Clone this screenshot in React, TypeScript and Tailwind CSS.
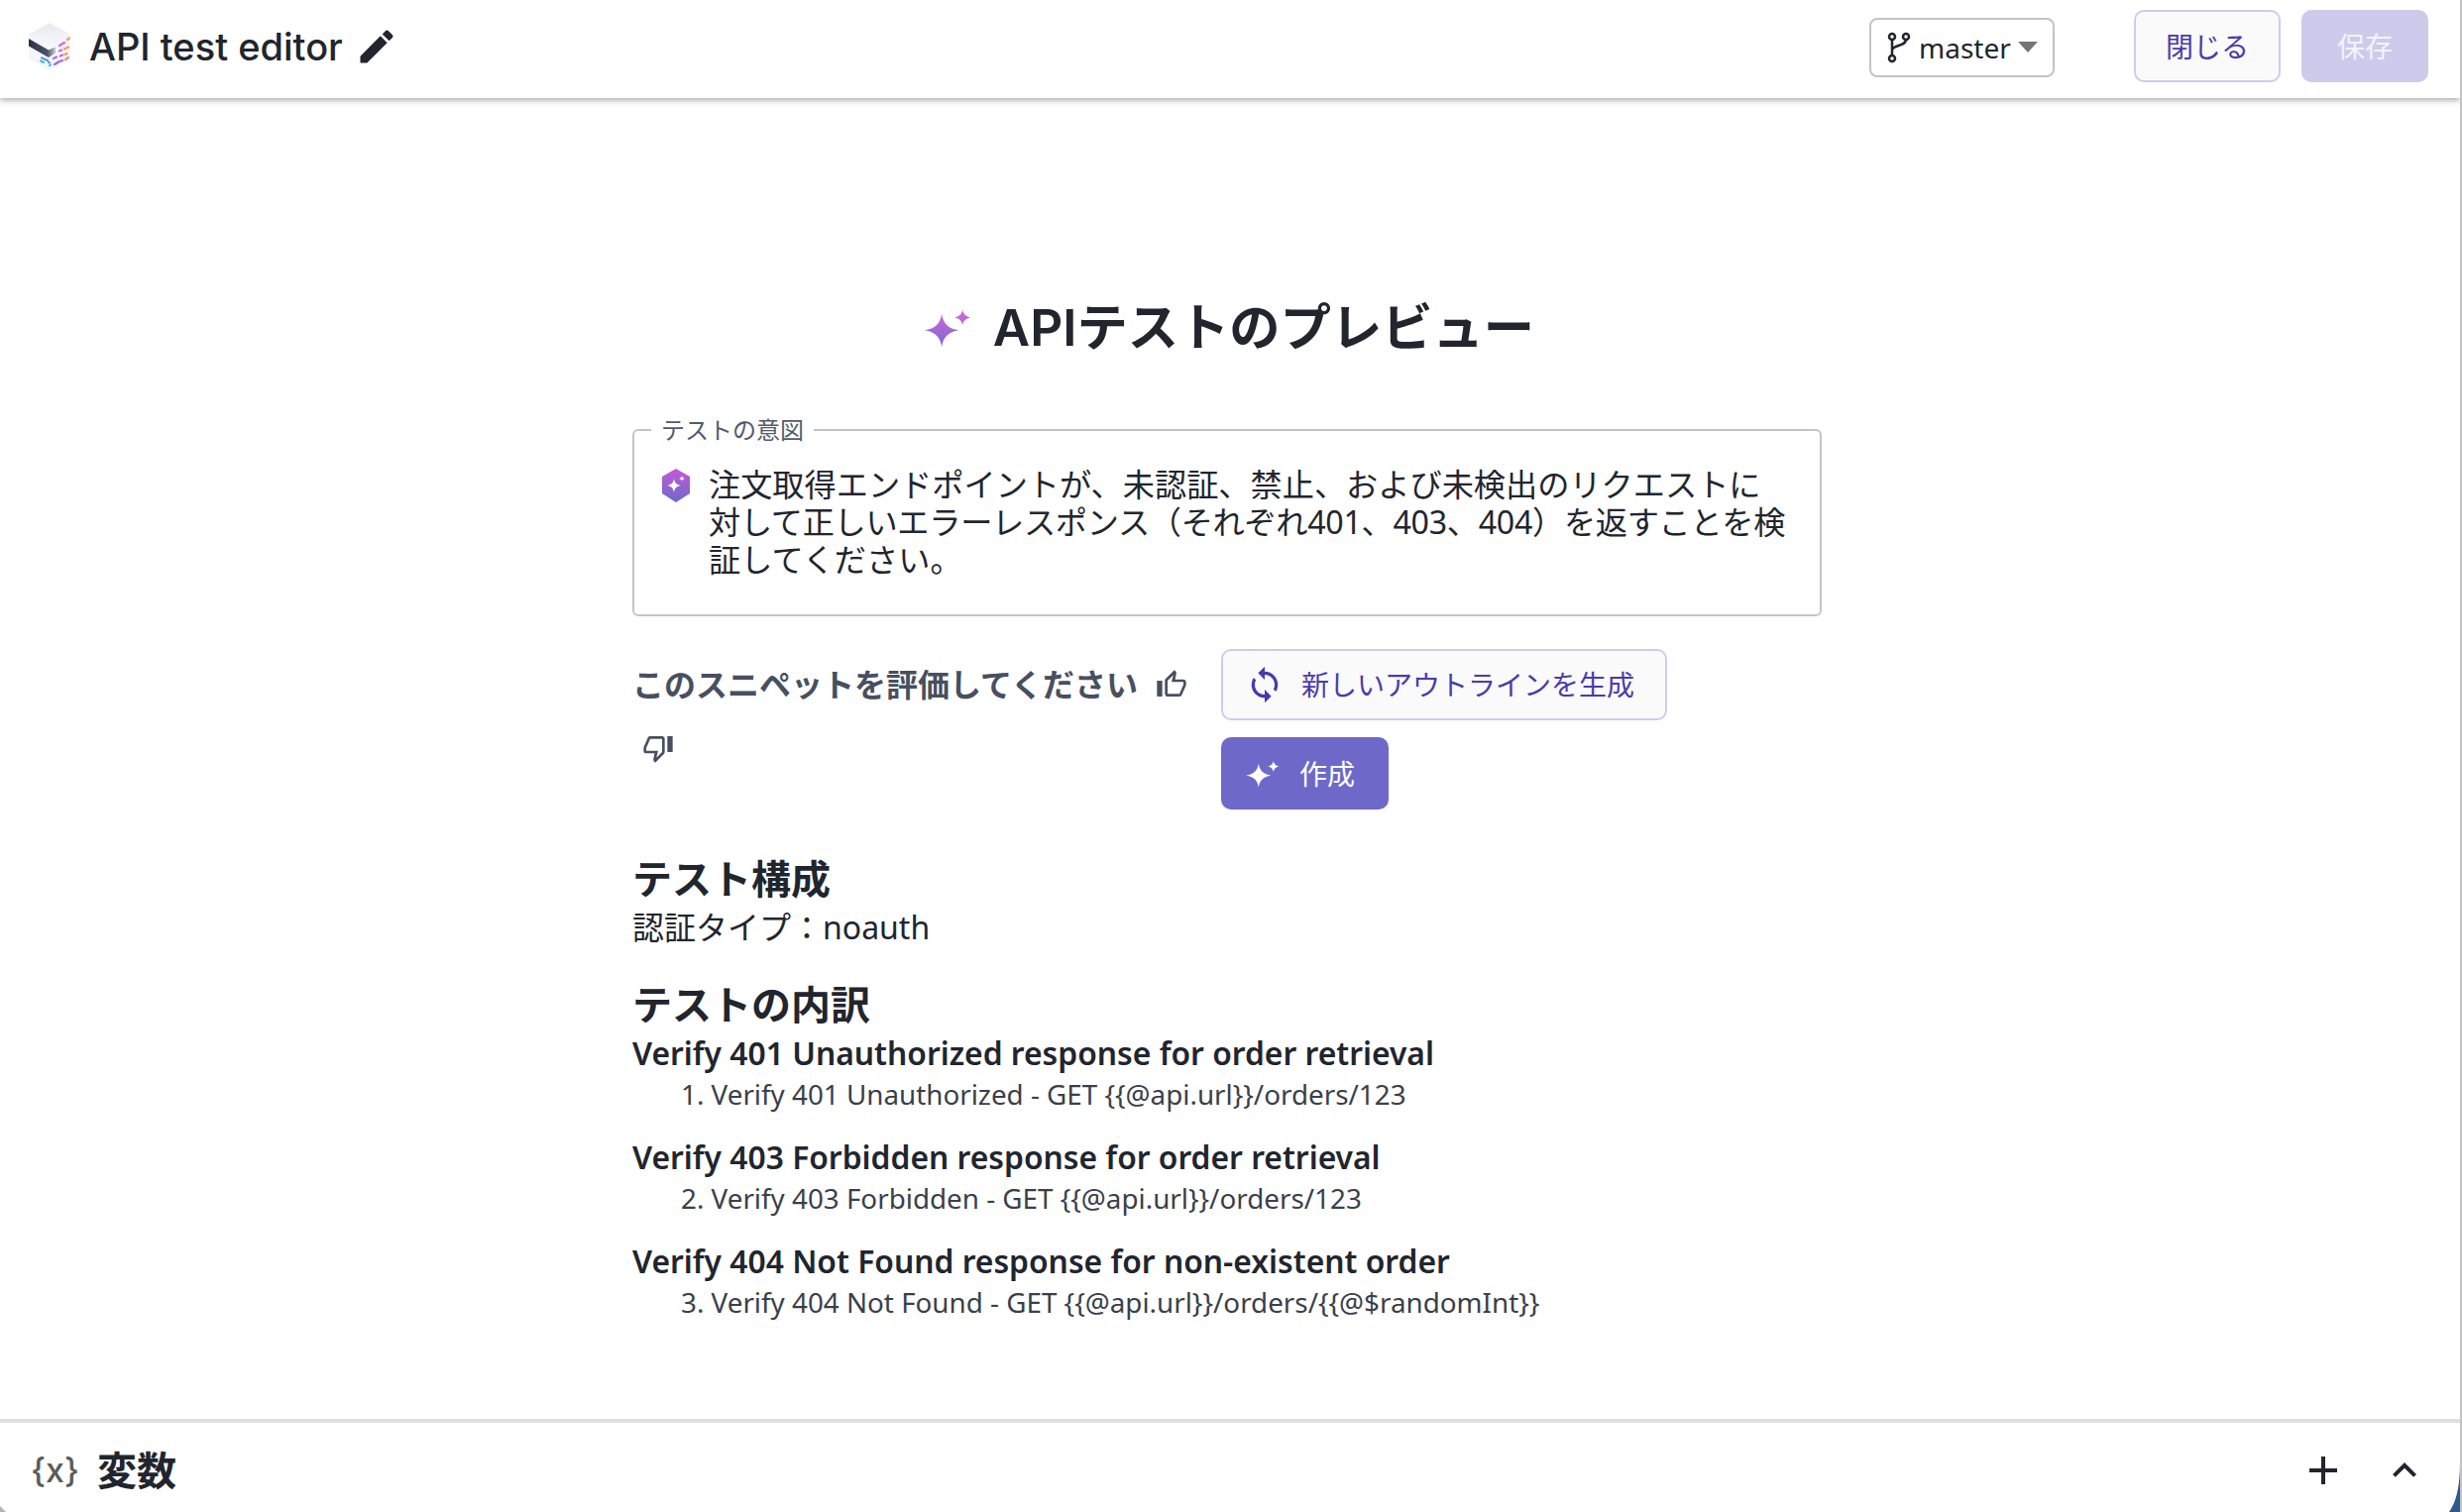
import { MdOutlineThumbUp, MdOutlineThumbDown, MdSync, MdAdd, MdKeyboardArrowUp } from "react-icons/md";

const Sparkle = ({ className, id, from, to }: { className: string; id: string; from: string; to: string }) => (
  <svg viewBox="0 0 48 48" className={className}>
    <defs>
      <linearGradient id={id} x1="0" y1="0" x2="0" y2="1">
        <stop offset="0" stopColor={from} />
        <stop offset="1" stopColor={to} />
      </linearGradient>
    </defs>
    <path
      fill={`url(#${id})`}
      d="M19 11.500c1.200 8.500 5.500 13 15 14.500-9.500 1.500-13.800 6-15 14.500-1.200-8.500-5.500-13-15-14.500 9.500-1.500 13.800-6 15-14.500zM37 8c.6 4 2.500 6 7 7-4.500 1-6.400 3-7 7-.6-4-2.500-6-7-7 4.500-1 6.400-3 7-7z"
    />
  </svg>
);

const Logo = () => (
  <svg viewBox="0 0 42 48" className="w-[42px] h-[48px] shrink-0">
    <defs>
      <linearGradient id="band" x1="0" y1="0" x2="1" y2="0">
        <stop offset="0" stopColor="#2a3145" />
        <stop offset="0.7" stopColor="#4c5468" />
        <stop offset="1" stopColor="#c8ccd6" />
      </linearGradient>
      <linearGradient id="top" x1="0" y1="0" x2="0" y2="1">
        <stop offset="0" stopColor="#e9ebf0" />
        <stop offset="1" stopColor="#f8f9fb" />
      </linearGradient>
    </defs>
    <path d="M19 1.200a4 4 0 0 1 4 0L40 10.500a3 3 0 0 1 2 3V35a3 3 0 0 1-2 2.600L23 47a4 4 0 0 1-4 0L2 37.600A3 3 0 0 1 0 35V13.500a3 3 0 0 1 2-3z" fill="#f4f5f8" />
    <path d="M19 1.200a4 4 0 0 1 4 0L40 10.500a2 2 0 0 1 0 3.500L23 25a4 4 0 0 1-4 0L2 14a2 2 0 0 1 0-3.500z" fill="url(#top)" />
    <path d="M0 16 20 27.500 27 24.500v6L20 35 0 23.500z" fill="url(#band)" />
    <g fill="none" strokeWidth="2.200" strokeLinecap="round">
      <path d="M31 23l5-3M31 28.500l2-1" stroke="#d268d8" />
      <path d="M39 17l2-1.500M36 26.500l4-2" stroke="#f59a6a" />
      <path d="M25 36l3-1.500M32 33.500l2-1" stroke="#b866dc" />
      <path d="M36.500 32l2-1M37 37l3-2" stroke="#f28f7a" />
      <path d="M26 42l5-3M33 38.500l1-.5" stroke="#9a6ae0" />
      <path d="M13 35.500l6 2.500M20 40l1 .3" stroke="#6c8fe0" />
      <path d="M12 38.500l3 1.500M21 43l1-.5" stroke="#46c4cf" />
    </g>
  </svg>
);

const items = [
  ["Verify 401 Unauthorized response for order retrieval", "1. Verify 401 Unauthorized - GET {{@api.url}}/orders/123"],
  ["Verify 403 Forbidden response for order retrieval", "2. Verify 403 Forbidden - GET {{@api.url}}/orders/123"],
  ["Verify 404 Not Found response for non-existent order", "3. Verify 404 Not Found - GET {{@api.url}}/orders/{{@$randomInt}}"],
];

export default function App() {
  return (
    <div className="relative w-[2484px] h-[1526px] overflow-hidden bg-white flex flex-col text-[#21252e] font-['Noto_Sans','Noto_Sans_CJK_JP',sans-serif] border-r-2 border-[#c4c4c4]">
      <header className="h-[99px] shrink-0 flex items-center pl-[29px] pr-[32px] pb-[6px] bg-white shadow-[0_2px_6px_rgba(0,0,0,0.35)] z-10">
        <Logo />
        <span className="ml-[19px] text-[38px] font-medium font-['Inter','Noto_Sans_CJK_JP',sans-serif] leading-none">API test editor</span>
        <svg viewBox="0 0 24 24" className="ml-[12px] w-[44px] h-[44px] fill-[#21252e]">
          <path d="M3 17.250V21h3.750L17.810 9.940l-3.750-3.750L3 17.250zM20.710 7.040a1 1 0 0 0 0-1.410l-2.340-2.340a1 1 0 0 0-1.410 0l-1.830 1.830 3.750 3.750 1.830-1.830z" />
        </svg>
        <div className="ml-auto flex items-center">
          <div className="mt-[2px] h-[60px] w-[187px] rounded-[8px] border-2 border-[#c4c4c4] flex items-center pl-[16px]">
            <svg viewBox="0 0 24 32" className="w-[24px] h-[32px] fill-none stroke-[#21252e] stroke-[2.5]">
              <circle cx="5" cy="5" r="3" />
              <circle cx="5" cy="27" r="3" />
              <circle cx="19" cy="5" r="3" />
              <path d="M5 8v16M19 8c0 7-14 5-14 11" />
            </svg>
            <span className="ml-[8px] text-[28px] leading-none">master</span>
            <svg viewBox="0 0 18 10" className="ml-[7px] w-[20px] h-[11px] fill-[#757575]">
              <path d="M0 0h18L9 10z" />
            </svg>
          </div>
          <button className="ml-[80px] h-[73px] w-[148px] rounded-[10px] border-2 border-[#cfcbee] bg-[#fafafa] text-[#4a3aad] text-[28px]">閉じる</button>
          <button className="ml-[21px] h-[73px] w-[128px] rounded-[10px] bg-[#cdcbeb] text-[#f4f4fb] text-[28px]">保存</button>
        </div>
      </header>

      <main className="flex-1 flex flex-col pl-[638px] w-[1838px]">
        <h1 className="mt-[201px] flex items-center justify-center gap-[18px] text-[51.300px] font-semibold leading-none font-['Inter','Noto_Sans_CJK_JP',sans-serif] h-[62px]">
          <Sparkle className="w-[56px] h-[56px]" id="s1" from="#d868d8" to="#7a68d0" />
          <span>APIテストのプレビュー</span>
        </h1>

        <fieldset className="mt-[60px] h-[200px] rounded-[6px] border-2 border-[#c4c4c4] pl-[27px] pr-[10px] min-w-0">
          <legend className="px-[10px] ml-[-10px] text-[24px] leading-none text-[#515b6b] h-[24px]">テストの意図</legend>
          <div className="flex pt-[24px]">
            <svg viewBox="0 0 30 34" className="w-[30px] h-[34px] shrink-0 mt-[3px]">
              <defs>
                <linearGradient id="hx" x1="0" y1="0" x2="0" y2="1">
                  <stop offset="0" stopColor="#c658d8" />
                  <stop offset="1" stopColor="#6c6ac8" />
                </linearGradient>
              </defs>
              <path d="M15 0 29 8v17l-14 9-14-9V8z" fill="url(#hx)" />
              <path d="M13 10c.8 4.500 2.500 6 6.500 7-4 1-5.700 2.500-6.500 7-.8-4.500-2.500-6-6.500-7 4-1 5.700-2.500 6.500-7zM21 7c.3 1.800 1 2.500 3 3-2 .5-2.700 1.200-3 3-.3-1.800-1-2.500-3-3 2-.5 2.700-1.200 3-3z" fill="#fff" />
            </svg>
            <p className="ml-[18px] text-[32.200px] leading-[38px] whitespace-nowrap">
              注文取得エンドポイントが、未認証、禁止、および未検出のリクエストに
              <br />
              <span className="tracking-[-0.3px]">対して正しいエラーレスポンス（それぞれ401、403、404）を返すことを検</span>
              <br />
              証してください。
            </p>
          </div>
        </fieldset>

        <div className="mt-[33px] flex">
          <div className="w-[594px] flex flex-wrap items-center content-start">
            <span className="text-[32px] font-semibold text-[#474f60] leading-[72px]">このスニペットを評価してください</span>
            <MdOutlineThumbUp className="ml-[18px] w-[32px] h-[32px] text-[#474f60]" />
            <div className="w-full pl-[10px] mt-[12px]">
              <MdOutlineThumbDown className="w-[32px] h-[32px] text-[#474f60]" />
            </div>
          </div>
          <div className="flex flex-col items-start gap-[17px]">
            <button className="h-[72px] w-[450px] rounded-[10px] border-2 border-[#cfcbee] bg-[#fafafa] text-[#4a3aad] text-[28px] flex items-center pl-[22px]">
              <MdSync className="w-[40px] h-[40px]" />
              <span className="ml-[17px]">新しいアウトラインを生成</span>
            </button>
            <button className="h-[73px] w-[169px] rounded-[10px] bg-[#6e69c9] text-white text-[28px] flex items-center pl-[22px]">
              <Sparkle className="w-[40px] h-[40px]" id="s2" from="#ffffff" to="#ffffff" />
              <span className="ml-[17px]">作成</span>
            </button>
          </div>
        </div>

        <h2 className="mt-[44px] text-[40px] font-semibold leading-[52px]">テスト構成</h2>
        <p className="mt-[1px] text-[32px] leading-[44px]">認証タイプ：noauth</p>
        <h2 className="mt-[30px] text-[40px] font-semibold leading-[52px]">テストの内訳</h2>
        <div className="flex flex-col gap-[20px]">
          {items.map(([t, s]) => (
            <div key={t} className="flex flex-col">
              <div className="pt-[1px] text-[31.800px] font-semibold leading-[44px]">{t}</div>
              <div className="mt-[-2px] pl-[49px] text-[27.800px] leading-[42px] text-[#3a3f4b]">{s}</div>
            </div>
          ))}
        </div>
      </main>

      <footer className="h-[94px] shrink-0 border-t-4 border-[#e0e0e0] flex items-center pt-[6px] pl-[31px] pr-[32px] bg-white">
        <span className="text-[34px] font-medium text-[#5c5c5c] font-['Inter',sans-serif] leading-none">{"{x}"}</span>
        <span className="ml-[18px] text-[40px] font-semibold leading-none">変数</span>
        <MdAdd className="ml-auto w-[48px] h-[48px]" />
        <MdKeyboardArrowUp className="ml-[34px] w-[48px] h-[48px]" />
      </footer>

      <svg viewBox="0 0 16 70" className="absolute right-[-2px] bottom-0 w-[16px] h-[70px] z-20">
        <path d="M16 0H14V20C14 45 10 60 3 70H16z" fill="#2c5a8f" />
      </svg>
      <svg viewBox="0 0 6 6" className="absolute left-0 bottom-0 w-[6px] h-[6px] z-20">
        <path d="M0 0 6 6H0z" fill="#b5b5b5" />
      </svg>
      <div className="absolute right-[-2px] top-[27px] w-px h-[18px] bg-[#333333] z-20" />
    </div>
  );
}
